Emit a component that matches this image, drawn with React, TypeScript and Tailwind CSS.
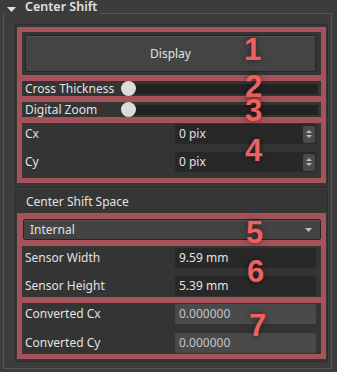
import React from "react";

const font = "font-['Noto_Sans','DejaVu_Sans',sans-serif]";

function Marker({ n, top, left }: { n: string; top: number; left: number }) {
  return (
    <span
      className="absolute font-['Liberation_Sans',sans-serif] font-bold text-[31px] leading-none text-[#f0605f] [text-shadow:0_0_6px_rgba(0,0,0,0.55)]"
      style={{ top, left }}
    >
      {n}
    </span>
  );
}

function SliderRow({ label }: { label: string }) {
  return (
    <div className="flex items-center h-[15px] bg-[#343434]">
      <span className="pl-[3px] w-[99px] shrink-0 leading-none">{label}</span>
      <div className="relative flex-1 mr-[3px] h-[11px] flex items-center">
        <div className="absolute left-[6px] right-0 h-[10px] bg-[#222]" />
        <div className="absolute left-0 w-[15px] h-[15px] rounded-full bg-[#dcdcdc]" />
      </div>
    </div>
  );
}

function SpinRow({ label, value }: { label: string; value: string }) {
  return (
    <div className="flex items-center h-[20px]">
      <span className="pl-[3px] flex-1">{label}</span>
      <div className="w-[141px] mr-[5px] h-[20px] rounded-[2px] bg-[#282828] flex items-center">
        <span className="pl-[4px] flex-1">{value}</span>
        <div className="w-[12px] h-[17px] mr-[1px] rounded-[2px] bg-[#4b4b4b] flex flex-col items-center justify-center gap-[2px]">
          <svg width="6" height="3" viewBox="0 0 6 3"><path d="M0 3L3 0L6 3Z" fill="#b8b8b8" /></svg>
          <svg width="6" height="3" viewBox="0 0 6 3"><path d="M0 0L6 0L3 3Z" fill="#b8b8b8" /></svg>
        </div>
      </div>
    </div>
  );
}

function FieldRow({ label, value, disabled }: { label: string; value: string; disabled?: boolean }) {
  return (
    <div className="flex items-center h-[20px]">
      <span className="pl-[3px] flex-1">{label}</span>
      <div
        className={
          disabled
            ? "w-[141px] mr-[5px] h-[20px] rounded-[2px] bg-[#4a4a4a] text-[#c4c4c4] flex items-center pl-[4px]"
            : "w-[141px] mr-[5px] h-[20px] rounded-[2px] bg-[#282828] flex items-center pl-[4px]"
        }
      >
        {value}
      </div>
    </div>
  );
}

export default function App() {
  return (
    <div className={`relative w-[337px] h-[372px] overflow-hidden bg-[#3c3c3c] text-[12px] text-[#e2e2e2] ${font}`}>
      {/* group header */}
      <div className="flex h-[14px]">
        <svg className="ml-[7px] mt-[7px] shrink-0" width="9" height="5" viewBox="0 0 9 5">
          <path d="M0 0H9L4.5 5Z" fill="#e0e0e0" />
        </svg>
        <span className="ml-[9px] leading-[14px] font-semibold text-[12.5px]">Center Shift</span>
        <div className="flex-1 self-end ml-[3px] mr-[5px] h-px bg-[#565656]" />
      </div>

      <div className="ml-[3px] w-[329px] h-[355px] border-l border-r border-b border-[#565656] pl-[11px] pr-[3px] pt-[10px] flex flex-col gap-[2px]">
        {/* panel 1 */}
        <div className="h-[164px] border border-[#2e2e2e] bg-[#363636] pt-[2px] pl-px pr-[1px]">
          <div className="bg-[#a5525a] p-[5px] flex flex-col gap-[6px]">
            <div className="h-[43px] bg-[#343434] pl-[3px] pr-[5px] py-[3px]">
              <div className="h-full rounded-[2px] border border-[#262626] bg-[#444] shadow-[inset_0_1px_0_#555] flex items-center justify-center">
                Display
              </div>
            </div>
            <SliderRow label="Cross Thickness" />
            <SliderRow label="Digital Zoom" />
            <div className="h-[55px] bg-[#343434] pt-px flex flex-col gap-[8px]">
              <SpinRow label="Cx" value="0 pix" />
              <SpinRow label="Cy" value="0 pix" />
            </div>
          </div>
        </div>

        {/* panel 2 */}
        <div className="h-[172px] border border-[#2e2e2e] bg-[#363636] pl-px pr-[1px]">
          <div className="h-[22px] pl-[9px] flex items-center">Center Shift Space</div>
          <div className="bg-[#a5525a] p-[5px] pt-[6px] flex flex-col gap-[6px]">
            <div className="h-[21px] ml-px rounded-[2px] border border-[#262626] bg-[#434343] shadow-[inset_0_1px_0_#525252] flex items-center pl-[6px] pr-[8px]">
              <span className="flex-1">Internal</span>
              <svg width="7" height="4" viewBox="0 0 7 4"><path d="M0 0H7L3.5 4Z" fill="#bdbdbd" /></svg>
            </div>
            <div className="h-[51px] bg-[#343434] py-[2px] flex flex-col gap-[8px]">
              <FieldRow label="Sensor Width" value="9.59 mm" />
              <FieldRow label="Sensor Height" value="5.39 mm" />
            </div>
            <div className="h-[51px] bg-[#343434] pt-px flex flex-col gap-[9px]">
              <FieldRow label="Converted Cx" value="0.000000" disabled />
              <FieldRow label="Converted Cy" value="0.000000" disabled />
            </div>
          </div>
        </div>
      </div>

      <Marker n="1" top={34} left={244} />
      <Marker n="2" top={71} left={245} />
      <Marker n="3" top={95} left={245} />
      <Marker n="4" top={135} left={245} />
      <Marker n="5" top={217} left={246} />
      <Marker n="6" top={256} left={247} />
      <Marker n="7" top={310} left={249} />
    </div>
  );
}
